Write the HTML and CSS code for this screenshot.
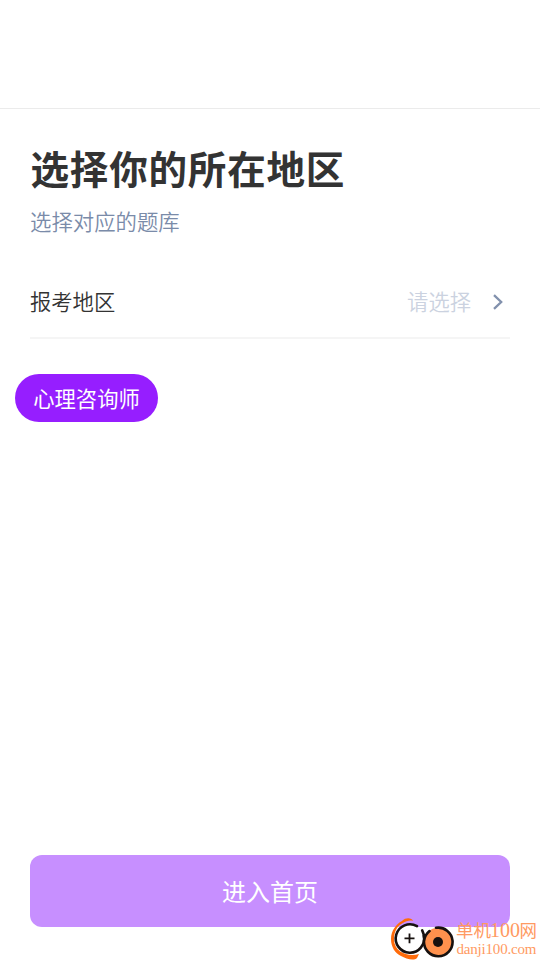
FILE: index.html
```html
<!DOCTYPE html>
<html lang="zh-CN">
<head>
<meta charset="utf-8">
<title>选择地区</title>
<link rel="stylesheet" href="styles.css">
</head>
<body>
<div class="page">
  <header class="topbar"></header>
  <main class="content">
    <h1 class="title">选择你的所在地区</h1>
    <p class="subtitle">选择对应的题库</p>
    <div class="field">
      <span class="label">报考地区</span>
      <span class="placeholder">请选择</span>
      <svg class="chevron" width="12" height="18" viewBox="0 0 12 18"><path d="M2 2.1 9.2 9 2 15.9" fill="none" stroke="#8291ad" stroke-width="2.3"/></svg>
    </div>
    <span class="chip">心理咨询师</span>
  </main>
  <button class="submit">进入首页</button>
  <div class="watermark">
    <svg class="logo" width="64" height="44" viewBox="0 0 64 44">
      <path d="M23 5C22 2 16 1 12 5 6 8 1 15 1 23c0 8 4 14 10 17 5 3 13 5 16 2l2-4C19 41 4 37 4 23 4 15 8 9 13 7c3-2 7-3 10-2Z" fill="#ff6b0a"/>
      <circle cx="19.8" cy="22.5" r="14" fill="#fff"/>
      <path d="M27 10.2A14.2 14.2 0 1 0 33.8 19.5" fill="none" stroke="#17110f" stroke-width="2.6" stroke-linecap="round"/>
      <path d="M14.5 22.4h10M19.5 17.5v9.8" stroke="#17110f" stroke-width="1.8"/>
      <circle cx="48.2" cy="26" r="14.3" fill="#ff914d"/>
      <path d="M46 11.8A14.3 14.3 0 1 1 34 25C34.5 21 36 18 39.5 15.1M32.2 14.3c1.5 3 2.4 6 2 10" fill="none" stroke="#17110f" stroke-width="2.6" stroke-linecap="round"/>
      <circle cx="48" cy="26" r="5" fill="#17110f"/>
    </svg>
    <svg class="brand" width="84" height="44" viewBox="0 0 84 44">
      <text class="brand-name" y="21"><tspan x="1">单机</tspan><tspan class="brand-number" x="35">100</tspan><tspan x="64.5">网</tspan></text>
      <text class="brand-url" x="1.5" y="38" textLength="80">danji100.com</text>
    </svg>
  </div>
</div>
</body>
</html>
```
FILE: styles.css
```css
* { box-sizing: border-box; }
body {
  margin: 0;
  background: #fff;
  font-family: "Noto Sans CJK SC", sans-serif;
}
.page {
  position: relative;
  display: flex;
  flex-direction: column;
  height: 960px;
  overflow: hidden;
}
.topbar { height: 109px; border-bottom: 1px solid #ebebeb; }
.content { flex: 1; padding: 34px 30px 0; }
.title {
  margin: 0;
  padding-left: 0.5px;
  font-size: 38.6px;
  letter-spacing: 0.75px;
  line-height: 48px;
  font-weight: 700;
  color: #333;
}
.subtitle {
  margin: 14px 0 0;
  font-size: 21.4px;
  line-height: 32px;
  font-weight: 350;
  color: #7a8ba9;
}
.field {
  display: flex;
  align-items: center;
  height: 73px;
  margin-top: 29px;
  padding-right: 6px;
  border-bottom: 2px solid #f5f5f5;
  font-size: 21.3px;
  font-weight: 350;
}
.label, .placeholder { padding-bottom: 2px; }
.label { color: #333; }
.placeholder { margin-left: auto; color: #cbd2e0; }
.chevron { margin-left: 21px; }
.chip {
  display: flex;
  align-items: center;
  justify-content: center;
  width: 143px;
  height: 48px;
  margin: 35px 0 0 -15px;
  padding-bottom: 2px;
  border-radius: 24px;
  background: #961eff;
  color: #fff;
  font-size: 21.3px;
  font-weight: 400;
}
.submit {
  height: 72px;
  margin: 0 30px 33px;
  padding: 0 0 2px;
  border: 0;
  border-radius: 12px;
  background: #c78fff;
  color: #fff;
  font: 24px "Noto Sans CJK SC", sans-serif;
}
.watermark {
  position: absolute;
  left: 390px;
  top: 916px;
  display: flex;
}
.brand { margin-left: 1px; }
.brand-name, .brand-url {
  font-family: "Liberation Serif", "Noto Sans CJK SC", serif;
  fill: #ff9a62;
}
.brand-name { font-size: 17.5px; }
.brand-number { font-size: 20px; }
.brand-url { font-size: 15px; }
```
